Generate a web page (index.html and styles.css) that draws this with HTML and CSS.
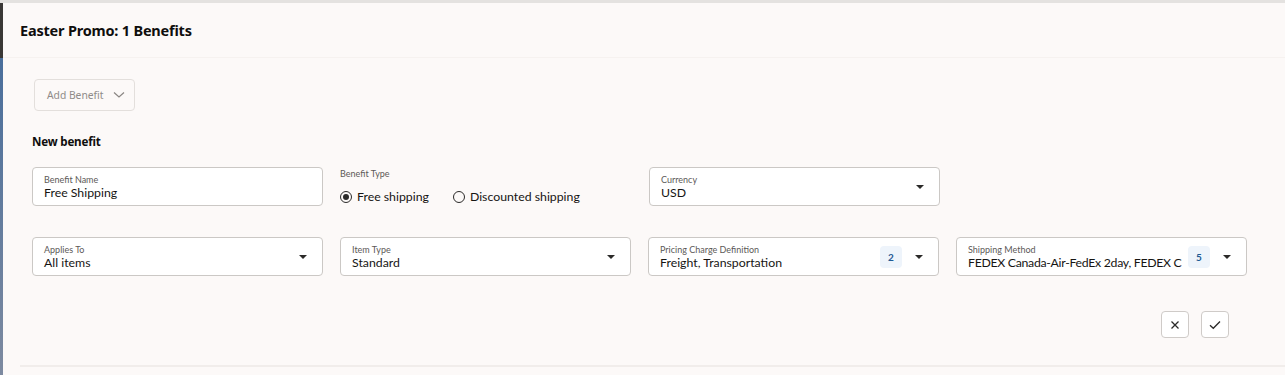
FILE: index.html
```html
<!DOCTYPE html>
<html>
<head>
<meta charset="utf-8">
<link rel="stylesheet" href="styles.css">
</head>
<body>
<div class="page">
  <div class="rail"></div>
  <div class="main">
    <div class="header"><h1 class="title">Easter Promo: 1 Benefits</h1></div>
    <div class="content">
      <button class="add-btn">Add Benefit
        <svg width="12" height="8" viewBox="0 0 12 8"><path d="M1 1.5 L6 6 L11 1.5" fill="none" stroke="#8a8683" stroke-width="1.2"/></svg>
      </button>
      <h2 class="section">New benefit</h2>
      <div class="row">
        <div class="field">
          <div class="field-body"><span class="label">Benefit Name</span><span class="value">Free Shipping</span></div>
        </div>
        <div class="radio-group">
          <span class="label">Benefit Type</span>
          <div class="radios">
            <span class="radio"><span class="dot on"></span>Free shipping</span>
            <span class="radio"><span class="dot"></span>Discounted shipping</span>
          </div>
        </div>
        <div class="field">
          <div class="field-body"><span class="label">Currency</span><span class="value">USD</span></div>
          <span class="caret"></span>
        </div>
        <div class="spacer"></div>
      </div>
      <div class="row row2">
        <div class="field">
          <div class="field-body"><span class="label">Applies To</span><span class="value">All items</span></div>
          <span class="caret"></span>
        </div>
        <div class="field">
          <div class="field-body"><span class="label">Item Type</span><span class="value">Standard</span></div>
          <span class="caret"></span>
        </div>
        <div class="field">
          <div class="field-body"><span class="label">Pricing Charge Definition</span><span class="value">Freight, Transportation</span></div>
          <span class="badge">2</span>
          <span class="caret"></span>
        </div>
        <div class="field">
          <div class="field-body"><span class="label">Shipping Method</span><span class="value clip">FEDEX Canada-Air-FedEx 2day, FEDEX C</span></div>
          <span class="badge">5</span>
          <span class="caret"></span>
        </div>
      </div>
      <div class="actions">
        <button class="icon-btn" aria-label="Cancel"><svg width="10" height="10" viewBox="0 0 10 10"><path d="M1.5 1.5 L8.5 8.5 M8.5 1.5 L1.5 8.5" stroke="#2b2a29" stroke-width="1.3"/></svg></button>
        <button class="icon-btn" aria-label="Save"><svg width="12" height="10" viewBox="0 0 12 10"><path d="M1 5.2 L4.3 8.3 L11 1.5" fill="none" stroke="#2b2a29" stroke-width="1.3"/></svg></button>
      </div>
      <div class="divider"></div>
    </div>
  </div>
</div>
</body>
</html>
```

FILE: styles.css
```css
* { box-sizing: border-box; }
html, body { margin: 0; padding: 0; }
body {
  width: 1285px;
  height: 375px;
  overflow: hidden;
  background: #fcf9f8;
  font-family: Lato, "Noto Sans", sans-serif;
  color: #161513;
}
.page {
  display: flex;
  height: 375px;
  border-top: 3px solid #e4e2e0;
}
.rail {
  width: 3px;
  flex: none;
  background: linear-gradient(to bottom, #3a3836 0, #3a3836 55px, #4a6f9c 55px, #7d8aa0 100%);
}
.main { flex: 1; display: flex; flex-direction: column; }
.header {
  height: 55px;
  padding: 17px 0 0 17px;
  border-bottom: 1px solid #f6f2f0;
}
.title {
  margin: 0;
  font-family: "Noto Sans", sans-serif;
  font-size: 14.5px;
  font-weight: 700;
  line-height: 20px;
  letter-spacing: -0.2px;
  color: #0f0e0d;
}
.content { padding: 21px 0 0 17px; display: flex; flex-direction: column; }
.add-btn {
  margin-left: 14px;
  width: 101px;
  height: 32px;
  border: 1px solid #e3dfdc;
  border-radius: 4px;
  background: #fcf9f8;
  color: #8f8b88;
  font-family: "Noto Sans", sans-serif;
  font-size: 10.3px;
  display: flex;
  align-items: center;
  gap: 9px;
  padding: 0 0 0 12px;
}
.section {
  margin: 23px 0 0 12px;
  font-family: "Noto Sans", sans-serif;
  font-size: 11.6px;
  font-weight: 700;
  line-height: 16px;
  letter-spacing: -0.2px;
  color: #0f0e0d;
}
.row {
  display: flex;
  gap: 17px;
  margin: 17px 0 0 12px;
}
.row2 { margin-top: 31px; }
.field {
  width: 291px;
  height: 39px;
  flex: none;
  background: #fff;
  border: 1px solid #cbc8c5;
  border-radius: 4px;
  display: flex;
  align-items: center;
  padding: 0 15px 0 11px;
}
.field-body { flex: 1; display: flex; flex-direction: column; min-width: 0; padding-top: 1px; }
.label {
  font-size: 9px;
  line-height: 11px;
  color: #5c5957;
}
.value {
  font-size: 12.3px;
  line-height: 16px;
  color: #161513;
  white-space: nowrap;
}
.clip { overflow: hidden; letter-spacing: -0.3px; }
.caret {
  width: 0; height: 0;
  border-left: 4px solid transparent;
  border-right: 4px solid transparent;
  border-top: 4px solid #2b2a29;
  margin-left: 13px;
  flex: none;
}
.badge {
  flex: none;
  width: 22px;
  height: 22px;
  border-radius: 4px;
  background: #eef4fb;
  color: #1f5a94;
  font-size: 10px;
  font-weight: 700;
  display: flex;
  align-items: center;
  justify-content: center;
  margin-left: 3px;
}
.radio-group {
  width: 292px;
  flex: none;
  display: flex;
  flex-direction: column;
  padding-top: 1px;
}
.radios { display: flex; gap: 24px; margin-top: 10px; }
.radio {
  display: flex; align-items: center; gap: 5px;
  font-size: 12.3px;
  line-height: 16px;
}
.dot {
  width: 12px; height: 12px;
  border: 1px solid #2b2a29;
  border-radius: 50%;
  display: inline-flex; align-items: center; justify-content: center;
}
.dot.on::after {
  content: "";
  width: 6px; height: 6px;
  border-radius: 50%;
  background: #2b2a29;
}
.spacer { flex: 1; }
.actions {
  display: flex;
  gap: 12px;
  margin: 35px 0 0 1141px;
}
.icon-btn {
  width: 28px; height: 27px;
  border: 1px solid #cfcbc8;
  border-radius: 4px;
  background: #fff;
  padding: 0;
  display: flex; align-items: center; justify-content: center;
}
.divider {
  margin-top: 27px;
  height: 2px;
  background: #f1edeb;
}
```
